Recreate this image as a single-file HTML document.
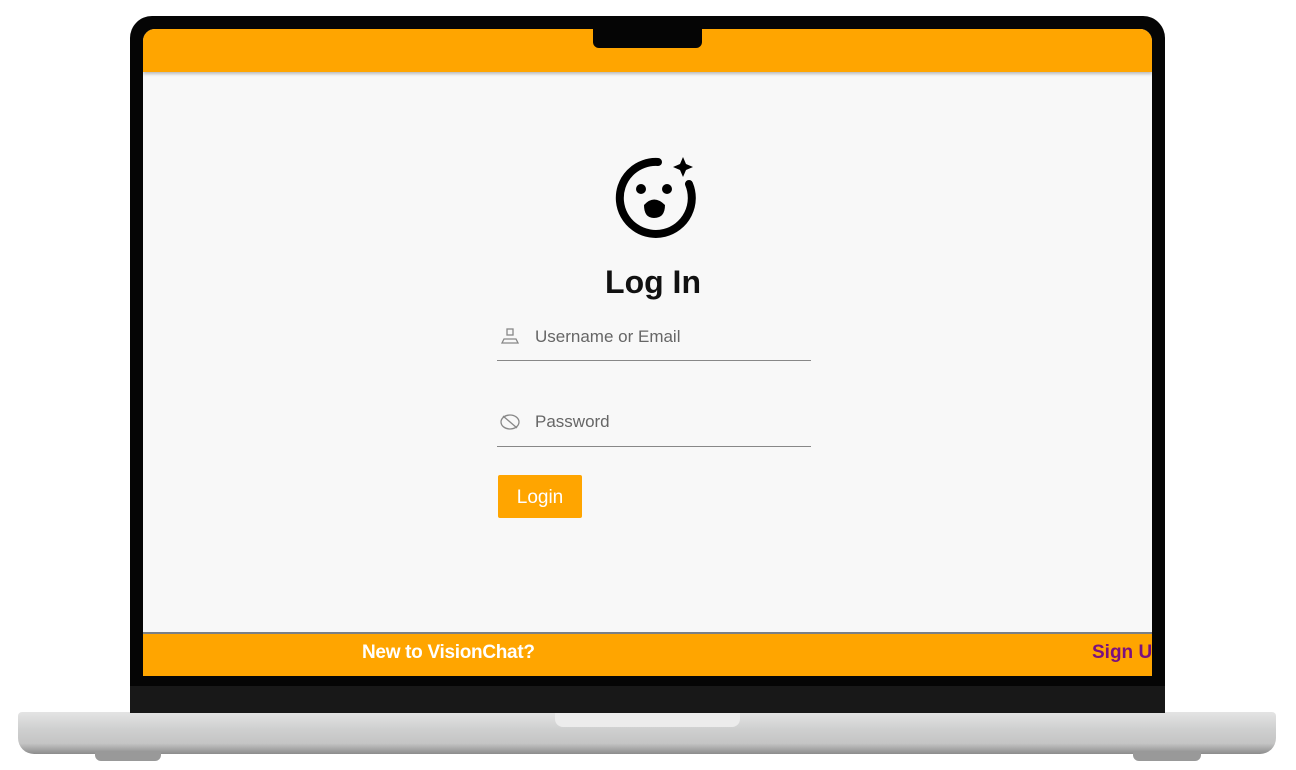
<!DOCTYPE html>
<html><head><style>
body{margin:0;width:1296px;height:770px;background:#fff;position:relative;overflow:hidden;font-family:"Liberation Sans",sans-serif}
div{position:absolute;box-sizing:border-box}
</style></head><body>
<div style="left:18px;top:712px;width:1258px;height:42px;border-radius:4px 4px 16px 16px;background:linear-gradient(#e4e4e4 0%,#cfd0d0 40%,#c4c4c4 75%,#8c8c8c 100%)"></div>
<div style="left:95px;top:752px;width:66px;height:9px;background:#999;border-radius:0 0 6px 6px"></div>
<div style="left:1133px;top:752px;width:68px;height:9px;background:#999;border-radius:0 0 6px 6px"></div>
<div style="left:555px;top:713px;width:185px;height:14px;background:#ececec;border-radius:0 0 8px 8px"></div>
<div style="left:130px;top:16px;width:1035px;height:697px;background:#050505;border-radius:22px 22px 0 0"></div>
<div style="left:130px;top:686px;width:1035px;height:27px;background:#181818"></div>
<div style="left:143px;top:29px;width:1009px;height:647px;background:#f8f8f8;border-radius:12px 12px 0 0;overflow:hidden">
 <div style="left:0;top:0;width:1009px;height:43px;background:#ffa500;box-shadow:0 2px 3px rgba(0,0,0,.25)"></div>
 <div style="left:450px;top:0;width:109px;height:19px;background:#050505;border-radius:0 0 6px 6px"></div>
 <div style="left:0;top:603px;width:1009px;height:44px;background:#ffa500;border-top:2px solid #7a7f86"></div>
 <div style="left:219px;top:613px;color:#fff;font-weight:bold;font-size:19px;letter-spacing:-0.3px">New to VisionChat?</div>
 <div style="left:949px;top:613px;color:#7b1080;font-weight:bold;font-size:19px;white-space:nowrap">Sign Up</div>
</div>
<svg style="position:absolute;left:600px;top:145px" width="110" height="105" viewBox="600 145 110 105">
 <path d="M689 184 A36 36 0 1 1 658 162" fill="none" stroke="#000" stroke-width="8" stroke-linecap="round"/>
 <path d="M683 157 L686 164 L693 167 L686 170 L683 177 L680 170 L673 167 L680 164Z" fill="#000"/>
 <circle cx="641" cy="189" r="5" fill="#000"/><circle cx="667" cy="189" r="5" fill="#000"/>
 <path d="M644 205 Q654 194 665 205 Q665 218 654 218 Q644 218 644 205Z" fill="#000"/>
</svg>
<div style="left:0;width:1296px;top:264px;text-align:center;font-size:32px;font-weight:bold;color:#111;padding-left:10px">Log In</div>
<svg style="position:absolute;left:500px;top:327px" width="20" height="18"><rect x="7" y="2" width="6" height="6" fill="none" stroke="#888" stroke-width="1.3"/><path d="M2 16 L4 12 L16 12 L18 16Z" fill="none" stroke="#888" stroke-width="1.3"/></svg>
<div style="left:535px;top:327px;font-size:17px;color:#666">Username or Email</div>
<div style="left:497px;top:360px;width:314px;height:1px;background:#888"></div>
<svg style="position:absolute;left:499px;top:413px" width="22" height="18"><ellipse cx="11" cy="9" rx="9" ry="7" fill="none" stroke="#888" stroke-width="1.3"/><path d="M4 3 L18 15" stroke="#888" stroke-width="1.3"/></svg>
<div style="left:535px;top:412px;font-size:17px;color:#666">Password</div>
<div style="left:497px;top:446px;width:314px;height:1px;background:#888"></div>
<div style="left:498px;top:475px;width:84px;height:43px;background:#ffa500;border-radius:2px;color:#fff;font-size:19px;text-align:center;line-height:45px">Login</div>
</body></html>
